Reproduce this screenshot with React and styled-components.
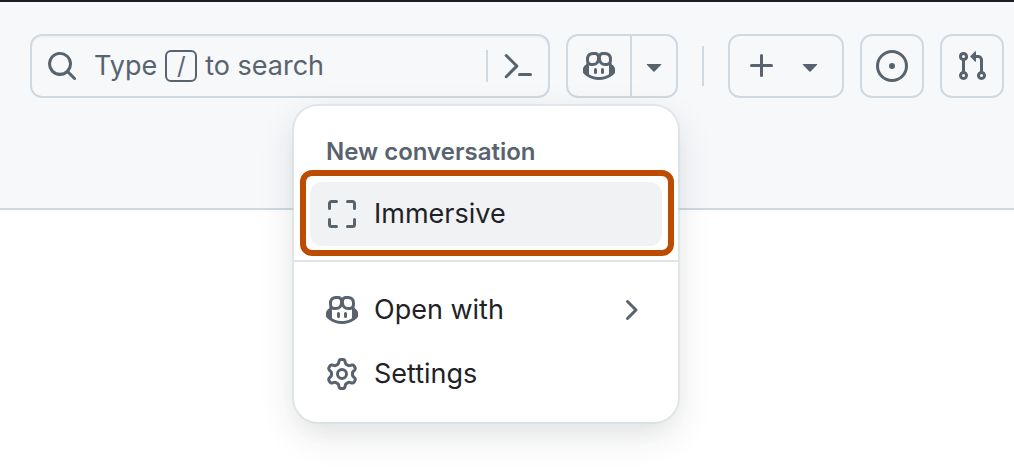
import styled, { createGlobalStyle } from "styled-components";

const ICONS = {
  search: "M10.68 11.74a6 6 0 0 1-7.922-8.982 6 6 0 0 1 8.982 7.922l3.04 3.04a.749.749 0 0 1-.326 1.275.749.749 0 0 1-.734-.215ZM11.5 7a4.499 4.499 0 1 0-8.997 0A4.499 4.499 0 0 0 11.5 7Z",
  command: "m6.354 8.04-4.773 4.773a.75.75 0 1 0 1.061 1.06L7.945 8.57a.75.75 0 0 0 0-1.06L2.642 2.206a.75.75 0 0 0-1.06 1.061L6.353 8.04ZM8.75 11.5a.75.75 0 0 0 0 1.5h5.5a.75.75 0 0 0 0-1.5h-5.5Z",
  copilot: "M7.998 15.035c-4.562 0-7.873-2.914-7.998-3.749V9.338c.085-.628.677-1.686 1.588-2.065.013-.07.024-.143.036-.218.029-.183.06-.384.126-.612-.201-.508-.254-1.084-.254-1.656 0-.87.128-1.769.693-2.484.579-.733 1.494-1.124 2.724-1.261 1.206-.134 2.262.034 2.944.765.05.053.096.108.139.165.044-.057.094-.112.143-.165.682-.731 1.738-.899 2.944-.765 1.23.137 2.145.528 2.724 1.261.566.715.693 1.614.693 2.484 0 .572-.053 1.148-.254 1.656.066.228.098.429.126.612.012.076.024.148.037.218.924.385 1.522 1.471 1.591 2.095v1.872c0 .766-3.351 3.795-8.002 3.795Zm0-1.485c2.28 0 4.584-1.11 5.002-1.433V7.862l-.023-.116c-.49.21-1.075.291-1.727.291-1.146 0-2.059-.327-2.71-.991A3.222 3.222 0 0 1 8 6.303a3.24 3.24 0 0 1-.544.743c-.65.664-1.563.991-2.71.991-.652 0-1.236-.081-1.727-.291l-.023.116v4.255c.419.323 2.722 1.433 5.002 1.433ZM6.762 2.83c-.193-.206-.637-.413-1.682-.297-1.019.113-1.479.404-1.713.7-.247.312-.369.789-.369 1.554 0 .793.129 1.171.308 1.371.162.181.519.379 1.442.379.853 0 1.339-.235 1.638-.54.315-.322.527-.827.617-1.553.117-.935-.037-1.395-.241-1.614Zm4.155-.297c-1.044-.116-1.488.091-1.681.297-.204.219-.359.679-.242 1.614.091.726.303 1.231.618 1.553.299.305.784.54 1.638.54.922 0 1.28-.198 1.442-.379.179-.2.308-.578.308-1.371 0-.765-.123-1.242-.37-1.554-.233-.296-.693-.587-1.713-.7ZM6.25 9.037a.75.75 0 0 1 .75.75v1.501a.75.75 0 0 1-1.5 0V9.787a.75.75 0 0 1 .75-.75Zm4.25.75v1.501a.75.75 0 0 1-1.5 0V9.787a.75.75 0 0 1 1.5 0Z",
  triangle: "m4.427 7.427 3.396 3.396a.25.25 0 0 0 .354 0l3.396-3.396A.25.25 0 0 0 11.396 7H4.604a.25.25 0 0 0-.177.427Z",
  plus: "M7.75 2a.75.75 0 0 1 .75.75V7h4.25a.75.75 0 0 1 0 1.5H8.5v4.25a.75.75 0 0 1-1.5 0V8.5H2.75a.75.75 0 0 1 0-1.5H7V2.75A.75.75 0 0 1 7.75 2Z",
  issue: "M8 9.5a1.5 1.5 0 1 0 0-3 1.5 1.5 0 0 0 0 3ZM8 0a8 8 0 1 1 0 16A8 8 0 0 1 8 0ZM1.5 8a6.5 6.5 0 1 0 13 0 6.5 6.5 0 0 0-13 0Z",
  pullRequest: "M1.5 3.25a2.25 2.25 0 1 1 3 2.122v5.256a2.251 2.251 0 1 1-1.5 0V5.372A2.25 2.25 0 0 1 1.5 3.25Zm5.677-.177L9.573.677A.25.25 0 0 1 10 .854V2.5h1A2.5 2.5 0 0 1 13.5 5v5.628a2.251 2.251 0 1 1-1.5 0V5a1 1 0 0 0-1-1h-1v1.646a.25.25 0 0 1-.427.177L7.177 3.427a.25.25 0 0 1 0-.354ZM3.75 2.5a.75.75 0 1 0 0 1.5.75.75 0 0 0 0-1.5Zm0 9.5a.75.75 0 1 0 0 1.5.75.75 0 0 0 0-1.5Zm8.25.75a.75.75 0 1 0 1.5 0 .75.75 0 0 0-1.5 0Z",
  screenFull: "M1.75 10a.75.75 0 0 1 .75.75v2.5c0 .138.112.25.25.25h2.5a.75.75 0 0 1 0 1.5h-2.5A1.75 1.75 0 0 1 1 13.25v-2.5a.75.75 0 0 1 .75-.75Zm12.5 0a.75.75 0 0 1 .75.75v2.5A1.75 1.75 0 0 1 13.25 15h-2.5a.75.75 0 0 1 0-1.5h2.5a.25.25 0 0 0 .25-.25v-2.5a.75.75 0 0 1 .75-.75ZM2.75 2.5a.25.25 0 0 0-.25.25v2.5a.75.75 0 0 1-1.5 0v-2.5C1 1.784 1.784 1 2.75 1h2.5a.75.75 0 0 1 0 1.5ZM10 1.75a.75.75 0 0 1 .75-.75h2.5c.966 0 1.75.784 1.75 1.75v2.5a.75.75 0 0 1-1.5 0v-2.5a.25.25 0 0 0-.25-.25h-2.5a.75.75 0 0 1-.75-.75Z",
  chevron: "M6.22 3.22a.75.75 0 0 1 1.06 0l4.25 4.25a.75.75 0 0 1 0 1.06l-4.25 4.25a.751.751 0 0 1-1.042-.018.751.751 0 0 1-.018-1.042L9.94 8 6.22 4.28a.75.75 0 0 1 0-1.06Z",
  gear: "M8 0a8.2 8.2 0 0 1 .701.031C9.444.095 9.99.645 10.16 1.29l.288 1.107c.018.066.079.158.212.224.231.114.454.243.668.386.123.082.233.09.299.071l1.103-.303c.644-.176 1.392.021 1.82.63.27.385.506.792.704 1.218.315.675.111 1.422-.364 1.891l-.814.806c-.049.048-.098.147-.088.294.016.257.016.515 0 .772-.01.147.038.246.088.294l.814.806c.475.469.679 1.216.364 1.891a7.977 7.977 0 0 1-.704 1.217c-.428.61-1.176.807-1.82.63l-1.102-.302c-.067-.019-.177-.011-.3.071a5.909 5.909 0 0 1-.668.386c-.133.066-.194.158-.211.224l-.29 1.106c-.168.646-.715 1.196-1.458 1.26a8.006 8.006 0 0 1-1.402 0c-.743-.064-1.289-.614-1.458-1.26l-.289-1.106c-.018-.066-.079-.158-.212-.224a5.738 5.738 0 0 1-.668-.386c-.123-.082-.233-.09-.299-.071l-1.103.303c-.644.176-1.392-.021-1.82-.63a8.12 8.12 0 0 1-.704-1.218c-.315-.675-.111-1.422.363-1.891l.815-.806c.05-.048.098-.147.088-.294a6.214 6.214 0 0 1 0-.772c.01-.147-.038-.246-.088-.294l-.815-.806C.635 6.045.431 5.298.746 4.623a7.92 7.92 0 0 1 .704-1.217c.428-.61 1.176-.807 1.82-.63l1.102.302c.067.019.177.011.3-.071.214-.143.437-.272.668-.386.133-.066.194-.158.211-.224l.29-1.106C6.009.645 6.556.095 7.299.03 7.53.01 7.764 0 8 0Zm-.571 1.525c-.036.003-.108.036-.137.146l-.289 1.105c-.147.561-.549.967-.998 1.189-.173.086-.34.183-.5.29-.417.278-.97.423-1.529.27l-1.103-.303c-.109-.03-.175.016-.195.045-.22.312-.412.644-.573.99-.014.031-.021.11.059.19l.815.806c.411.406.562.957.53 1.456a4.709 4.709 0 0 0 0 .582c.032.499-.119 1.05-.53 1.456l-.815.806c-.081.08-.073.159-.059.19.162.346.353.677.573.989.02.03.085.076.195.046l1.102-.303c.56-.153 1.113-.008 1.53.27.161.107.328.204.501.29.447.222.85.629.997 1.189l.289 1.105c.029.109.101.143.137.146a6.6 6.6 0 0 0 1.142 0c.036-.003.108-.036.137-.146l.289-1.105c.147-.561.549-.967.998-1.189.173-.086.34-.183.5-.29.417-.278.97-.423 1.529-.27l1.103.303c.109.029.175-.016.195-.045.22-.313.411-.644.573-.99.014-.031.021-.11-.059-.19l-.815-.806c-.411-.406-.562-.957-.53-1.456a4.709 4.709 0 0 0 0-.582c-.032-.499.119-1.05.53-1.456l.815-.806c.081-.08.073-.159.059-.19a6.464 6.464 0 0 0-.573-.989c-.02-.03-.085-.076-.195-.046l-1.102.303c-.56.153-1.113.008-1.53-.27a4.44 4.44 0 0 0-.501-.29c-.447-.222-.85-.629-.997-1.189l-.289-1.105c-.029-.11-.101-.143-.137-.146a6.6 6.6 0 0 0-1.142 0ZM11 8a3 3 0 1 1-6 0 3 3 0 0 1 6 0ZM9.5 8a1.5 1.5 0 1 0-3.001.001A1.5 1.5 0 0 0 9.5 8Z",
};

const Icon = ({ name }) => (
  <IconSvg viewBox="0 0 16 16" aria-hidden="true">
    <path d={ICONS[name]} />
  </IconSvg>
);

const App = () => {
  return (
    <Page>
      <GlobalStyle />
      <Header>
        <SearchBox>
          <SearchButton type="button">
            <Icon name="search" />
            <SearchHint>
              <span>Type</span>
              <Key>/</Key>
              <span>to search</span>
            </SearchHint>
          </SearchButton>
          <Separator $height={32} />
          <CommandButton type="button" aria-label="Command palette">
            <Icon name="command" />
          </CommandButton>
        </SearchBox>

        <CopilotGroup>
          <SplitButton>
            <SplitPart type="button" $width={62} aria-label="Chat with Copilot">
              <Icon name="copilot" />
            </SplitPart>
            <SplitPart type="button" $width={46} $divided aria-label="Open Copilot menu">
              <Icon name="triangle" />
            </SplitPart>
          </SplitButton>

          <Menu>
            <MenuHeading>New conversation</MenuHeading>
            <MenuItem type="button" $active>
              <Icon name="screenFull" />
              <MenuLabel>Immersive</MenuLabel>
            </MenuItem>
            <MenuDivider />
            <MenuItem type="button">
              <Icon name="copilot" />
              <MenuLabel>Open with</MenuLabel>
              <Icon name="chevron" />
            </MenuItem>
            <MenuItem type="button">
              <Icon name="gear" />
              <MenuLabel>Settings</MenuLabel>
            </MenuItem>
          </Menu>
        </CopilotGroup>

        <HeaderDivider $height={40} />

        <HeaderButton type="button" $wide aria-label="Create new">
          <Icon name="plus" />
          <Icon name="triangle" />
        </HeaderButton>
        <HeaderButton type="button" aria-label="Issues">
          <Icon name="issue" />
        </HeaderButton>
        <HeaderButton type="button" aria-label="Pull requests">
          <Icon name="pullRequest" />
        </HeaderButton>
      </Header>
    </Page>
  );
};

export default App;

const GlobalStyle = createGlobalStyle`
  * {
    box-sizing: border-box;
  }
  body {
    margin: 0;
    background: #ffffff;
    color: #1f2328;
    font-family: Inter, "Liberation Sans", sans-serif;
  }
  button {
    margin: 0;
    padding: 0;
    border: 0;
    background: none;
    color: inherit;
    font: inherit;
    cursor: pointer;
  }
`;

const Page = styled.div`
  min-height: 100vh;
`;

const IconSvg = styled.svg`
  display: block;
  flex: none;
  width: 32px;
  height: 32px;
  fill: #59636e;
`;

const Header = styled.header`
  display: flex;
  align-items: center;
  gap: 16px;
  padding: 32px 10px 110px 30px;
  border-top: 2px solid #1f1f28;
  border-bottom: 2px solid #d1d9e0;
  background: #f6f8fa;
`;

const SearchBox = styled.div`
  display: flex;
  flex: 1;
  align-items: center;
  gap: 14px;
  height: 64px;
  padding: 0 14px;
  border: 2px solid #d1d9e0;
  border-radius: 12px;
  box-shadow: inset 0 2px 0 rgba(31, 35, 40, 0.03);
`;

const SearchButton = styled.button`
  display: flex;
  flex: 1;
  align-items: center;
  gap: 16px;
  && {
    color: #59636e;
    font-size: 27px;
    line-height: 34px;
  }
  text-align: left;
  white-space: nowrap;
`;

const SearchHint = styled.span`
  display: flex;
  align-items: center;
  gap: 8px;
`;

const Key = styled.kbd`
  width: 32px;
  height: 32px;
  border: 2px solid #59636e;
  border-radius: 6px;
  font-family: inherit;
  font-size: 24px;
  line-height: 28px;
  text-align: center;
`;

const CommandButton = styled.button`
  display: flex;
`;

const Separator = styled.div`
  width: 2px;
  height: ${({ $height }) => $height}px;
  background: #d1d9e0;
`;

const HeaderDivider = styled(Separator)`
  margin: 0 8px;
`;

const HeaderButton = styled.button`
  display: flex;
  align-items: center;
  gap: 16px;
  height: 64px;
  && {
    padding: 0 ${({ $wide }) => ($wide ? 16 : 14)}px;
    border: 2px solid #d1d9e0;
  }
  border-radius: 12px;
`;

const CopilotGroup = styled.div`
  position: relative;
`;

const SplitButton = styled.div`
  display: flex;
  height: 64px;
  border: 2px solid #d1d9e0;
  border-radius: 12px;
`;

const SplitPart = styled.button`
  display: flex;
  align-items: center;
  justify-content: center;
  width: ${({ $width }) => $width}px;
  && {
    border-left: ${({ $divided }) => ($divided ? "2px solid #d1d9e0" : "0")};
  }
`;

const Menu = styled.div`
  position: absolute;
  top: calc(100% + 8px);
  right: 0;
  z-index: 10;
  width: 384px;
  padding: 16px;
  border-radius: 24px;
  background: #ffffff;
  box-shadow:
    0 0 0 2px rgba(209, 217, 224, 0.5),
    0 12px 24px -6px rgba(37, 41, 46, 0.04),
    0 12px 36px 0 rgba(37, 41, 46, 0.12);
`;

const MenuHeading = styled.h3`
  margin: 0;
  padding: 12px 16px;
  color: #59636e;
  font-size: 24px;
  font-weight: 600;
  line-height: 36px;
`;

const MenuItem = styled.button`
  position: relative;
  display: flex;
  align-items: center;
  gap: 16px;
  width: 100%;
  height: 64px;
  && {
    padding: 0 16px;
    background: ${({ $active }) => ($active ? "#f1f2f4" : "none")};
    font-size: 27px;
    line-height: 40px;
  }
  border-radius: 12px;
  text-align: left;

  /* callout frame round the active item */
  &::after {
    content: "";
    display: ${({ $active }) => ($active ? "block" : "none")};
    position: absolute;
    inset: -12px -12px -10px -10px;
    border: 6px solid #bc4c00;
    border-radius: 12px;
  }
`;

const MenuLabel = styled.span`
  flex: 1;
`;

const MenuDivider = styled.hr`
  height: 2px;
  margin: 14px -16px 16px;
  border: 0;
  background: #dfe4e9;
`;
